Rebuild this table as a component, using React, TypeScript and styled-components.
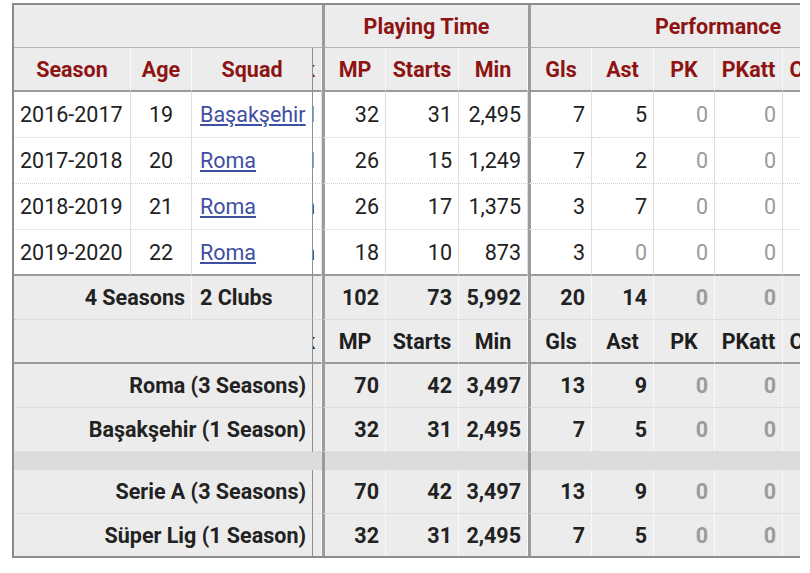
import styled, { createGlobalStyle } from 'styled-components';

const GlobalStyle = createGlobalStyle`
  body {
    margin: 0;
    background: #ffffff;
    font-family: Roboto, "Liberation Sans", Arial, sans-serif;
  }
`;

type Kind = 'group' | 'head' | 'data' | 'lastData' | 'total' | 'subHead' | 'split' | 'gap' | 'end';

const rowStyles: Record<Kind, { h: number; bg: string; rule: string; line: string }> = {
  group: { h: 43, bg: '#ececec', rule: '1px solid #b4b4b4', line: 'transparent' },
  head: { h: 44, bg: '#ececec', rule: '2px solid #9a9a9a', line: '#f8f8f8' },
  data: { h: 46, bg: '#ffffff', rule: '1px dotted #cfcfcf', line: '#dedede' },
  lastData: { h: 46, bg: '#ffffff', rule: '2px solid #9a9a9a', line: '#dedede' },
  total: { h: 44, bg: '#ececec', rule: '1px dotted #d0d0d0', line: '#f8f8f8' },
  subHead: { h: 44, bg: '#ececec', rule: '2px solid #9a9a9a', line: '#f8f8f8' },
  split: { h: 44, bg: '#ececec', rule: '1px dotted #d0d0d0', line: '#f8f8f8' },
  gap: { h: 18, bg: '#dcdcdc', rule: 'none', line: 'transparent' },
  end: { h: 42, bg: '#ececec', rule: 'none', line: '#f8f8f8' },
};

const Frame = styled.div`
  width: 788px;
  margin: 3px 0 0 12px;
  overflow: hidden;
`;

const Table = styled.table`
  width: 893px;
  table-layout: fixed;
  border-collapse: separate;
  border-spacing: 0;
  border-left: 2px solid #8c8c8c;
  border-top: 2px solid #8c8c8c;
  border-bottom: 2px solid #8c8c8c;
  font-size: 21.5px;
  color: #222222;
`;

const Row = styled.tr<{ $kind: Kind }>`
  height: ${(p) => rowStyles[p.$kind].h}px;
  background: ${(p) => rowStyles[p.$kind].bg};
  --line: ${(p) => rowStyles[p.$kind].line};

  & > td,
  & > th {
    border-bottom: ${(p) => rowStyles[p.$kind].rule};
  }
`;

const Cell = styled.td<{
  $align?: 'left' | 'center' | 'right';
  $bold?: boolean;
  $muted?: boolean;
  $thick?: boolean;
  $frozen?: boolean;
}>`
  padding: 0 6px 0 ${(p) => (p.$frozen && p.$align === 'left' ? 8 : 6)}px;
  text-align: ${(p) => p.$align ?? 'right'};
  font-weight: ${(p) => (p.$bold ? 700 : 400)};
  color: ${(p) => (p.$muted ? '#9b9b9b' : '#222222')};
  border-left: ${(p) => (p.$thick ? '3px solid #9b9b9b' : 'none')};
  border-right: 1px solid ${(p) => (p.$frozen ? '#8f8f8f' : 'var(--line)')};
  white-space: nowrap;
  overflow: hidden;
`;

const GroupHead = styled.th<{ $thick?: boolean }>`
  padding: 0;
  text-align: center;
  font-weight: 700;
  color: #8e1414;
  border-left: ${(p) => (p.$thick ? '3px solid #9b9b9b' : 'none')};
  white-space: nowrap;
  overflow: hidden;
`;

const ColHead = styled.th<{ $dark?: boolean; $thick?: boolean; $frozen?: boolean }>`
  padding: 0 4px;
  text-align: center;
  font-weight: 700;
  color: ${(p) => (p.$dark ? '#1e1e1e' : '#8e1414')};
  border-left: ${(p) => (p.$thick ? '3px solid #9b9b9b' : 'none')};
  border-right: 1px solid ${(p) => (p.$frozen ? '#8f8f8f' : 'var(--line)')};
  white-space: nowrap;
  overflow: hidden;
`;

const Sliver = styled.td`
  padding: 0;
  border-right: 1px solid var(--line);
`;

/* only the last few pixels of the hidden column peek out */
const SliverText = styled.div<{ $dark?: boolean; $head?: boolean }>`
  display: flex;
  justify-content: flex-end;
  width: 8px;
  padding-right: 6px;
  box-sizing: border-box;
  overflow: hidden;
  white-space: nowrap;
  font-weight: ${(p) => (p.$head ? 700 : 400)};
  color: ${(p) => (p.$head && !p.$dark ? '#8e1414' : '#222222')};
`;

const TeamLink = styled.a`
  color: #3e4fa4;
  text-decoration: underline;
  text-underline-offset: 2px;
`;

type Line = { mp: number; starts: number; min: string; gls: number; ast: number; pk: number; pkatt: number };

const seasons: (Line & { season: string; age: number; squad: string; rank: string })[] = [
  { season: '2016-2017', age: 19, squad: 'Başakşehir', rank: 'd', mp: 32, starts: 31, min: '2,495', gls: 7, ast: 5, pk: 0, pkatt: 0 },
  { season: '2017-2018', age: 20, squad: 'Roma', rank: 'd', mp: 26, starts: 15, min: '1,249', gls: 7, ast: 2, pk: 0, pkatt: 0 },
  { season: '2018-2019', age: 21, squad: 'Roma', rank: 'h', mp: 26, starts: 17, min: '1,375', gls: 3, ast: 7, pk: 0, pkatt: 0 },
  { season: '2019-2020', age: 22, squad: 'Roma', rank: 'h', mp: 18, starts: 10, min: '873', gls: 3, ast: 0, pk: 0, pkatt: 0 },
];

const totals: Line = { mp: 102, starts: 73, min: '5,992', gls: 20, ast: 14, pk: 0, pkatt: 0 };
const roma: Line = { mp: 70, starts: 42, min: '3,497', gls: 13, ast: 9, pk: 0, pkatt: 0 };
const basak: Line = { mp: 32, starts: 31, min: '2,495', gls: 7, ast: 5, pk: 0, pkatt: 0 };

const splits: { label: string; line: Line; kind: Kind }[][] = [
  [
    { label: 'Roma (3 Seasons)', line: roma, kind: 'split' },
    { label: 'Başakşehir (1 Season)', line: basak, kind: 'split' },
  ],
  [
    { label: 'Serie A (3 Seasons)', line: roma, kind: 'split' },
    { label: 'Süper Lig (1 Season)', line: basak, kind: 'end' },
  ],
];

const widths = [117, 61, 121, 9, 64, 73, 69, 64, 62, 61, 68, 61, 61];
const statHeads = ['MP', 'Starts', 'Min', 'Gls', 'Ast', 'PK', 'PKatt', 'CrdY', ''];

const Stats = ({ line, bold }: { line: Line; bold?: boolean }) => {
  const values: (number | string)[] = [line.mp, line.starts, line.min, line.gls, line.ast, line.pk, line.pkatt];
  return (
    <>
      {values.map((v, i) => (
        <Cell key={i} $bold={bold} $muted={v === 0} $thick={i === 0 || i === 3}>
          {v}
        </Cell>
      ))}
      <Cell />
      <Cell />
    </>
  );
};

const StatHeads = ({ dark }: { dark?: boolean }) => (
  <>
    {statHeads.map((h, i) => (
      <ColHead key={i} $dark={dark} $thick={i === 0 || i === 3}>
        {h}
      </ColHead>
    ))}
  </>
);

export default function App() {
  return (
    <>
      <GlobalStyle />
      <Frame>
        <Table>
          <colgroup>
            {widths.map((w, i) => (
              <col key={i} style={{ width: w }} />
            ))}
          </colgroup>
          <thead>
            <Row $kind="group">
              <GroupHead colSpan={4} />
              <GroupHead colSpan={3} $thick>
                Playing Time
              </GroupHead>
              <GroupHead colSpan={6} $thick>
                Performance
              </GroupHead>
            </Row>
            <Row $kind="head">
              <ColHead>Season</ColHead>
              <ColHead>Age</ColHead>
              <ColHead $frozen>Squad</ColHead>
              <Sliver>
                <SliverText $head>k</SliverText>
              </Sliver>
              <StatHeads />
            </Row>
          </thead>
          <tbody>
            {seasons.map((s, i) => (
              <Row key={s.season} $kind={i === seasons.length - 1 ? 'lastData' : 'data'}>
                <Cell $align="left">{s.season}</Cell>
                <Cell $align="center">{s.age}</Cell>
                <Cell $align="left" $frozen>
                  <TeamLink href="#">{s.squad}</TeamLink>
                </Cell>
                <Sliver>
                  <SliverText>{s.rank}</SliverText>
                </Sliver>
                <Stats line={s} />
              </Row>
            ))}
            <Row $kind="total">
              <Cell colSpan={2} $bold>
                4 Seasons
              </Cell>
              <Cell $align="left" $bold $frozen>
                2 Clubs
              </Cell>
              <Sliver />
              <Stats line={totals} bold />
            </Row>
            <Row $kind="subHead">
              <Cell colSpan={3} $frozen />
              <Sliver>
                <SliverText $head $dark>
                  k
                </SliverText>
              </Sliver>
              <StatHeads dark />
            </Row>
            {splits.map((group, g) => (
              <>
                {g > 0 && (
                  <Row key={`gap-${g}`} $kind="gap">
                    <Cell colSpan={4} />
                    <Cell colSpan={3} $thick />
                    <Cell colSpan={6} $thick />
                  </Row>
                )}
                {group.map((r) => (
                  <Row key={r.label} $kind={r.kind}>
                    <Cell colSpan={3} $bold $frozen>
                      {r.label}
                    </Cell>
                    <Sliver />
                    <Stats line={r.line} bold />
                  </Row>
                ))}
              </>
            ))}
          </tbody>
        </Table>
      </Frame>
    </>
  );
}
